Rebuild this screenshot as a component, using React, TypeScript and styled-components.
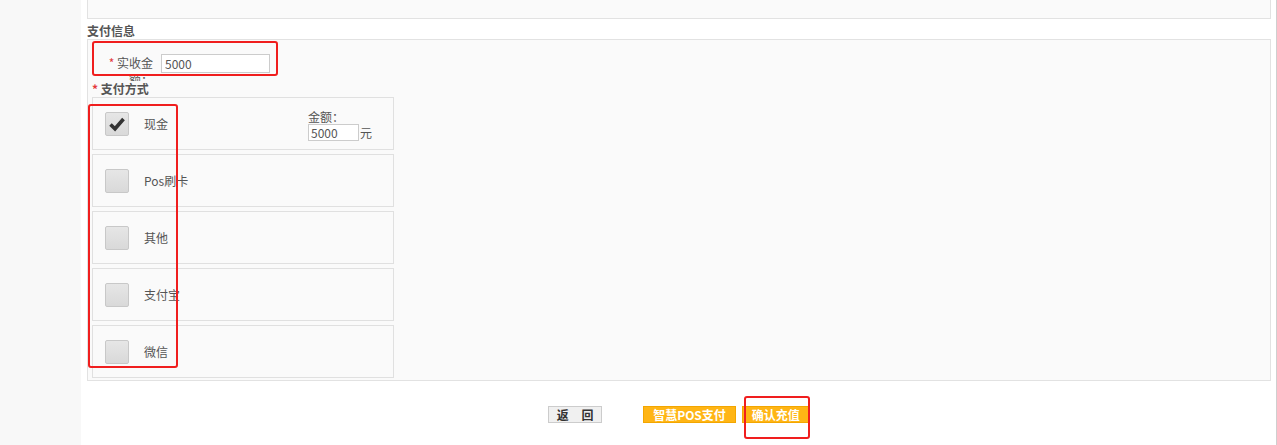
import React from "react";
import styled, { createGlobalStyle } from "styled-components";

const methods = [
  { key: "cash", label: "现金", checked: true },
  { key: "pos", label: "Pos刷卡", checked: false },
  { key: "other", label: "其他", checked: false },
  { key: "alipay", label: "支付宝", checked: false },
  { key: "wechat", label: "微信", checked: false },
];

// red marks drawn on the screenshot
const marks = [
  { left: 92, top: 41, width: 186, height: 35 },
  { left: 88, top: 104, width: 90, height: 264 },
  { left: 744, top: 396, width: 66, height: 43 },
];

const App: React.FC = () => {
  return (
    <Page>
      <GlobalStyle />
      <Sidebar />
      <Main>
        <TopBox />
        <SectionTitle>支付信息</SectionTitle>
        <InfoBox>
          <AmountRow>
            <AmountLabel>
              <Star>*</Star> 实收金额：
            </AmountLabel>
            <AmountInput defaultValue='5000' />
          </AmountRow>
          <MethodTitle>
            <Star>*</Star> 支付方式
          </MethodTitle>
          <MethodList>
            {methods.map((m) => (
              <MethodRow key={m.key}>
                <CheckBox>
                  {m.checked && (
                    <svg width='18' height='16' viewBox='0 0 18 16'>
                      <path
                        d='M2.5 8.5 L7 12.8 L15.5 3'
                        fill='none'
                        stroke='#333'
                        strokeWidth='3.6'
                        strokeLinejoin='miter'
                      />
                    </svg>
                  )}
                </CheckBox>
                <MethodName>{m.label}</MethodName>
                {m.checked && (
                  <MoneyBox>
                    <span>金额：</span>
                    <MoneyLine>
                      <MoneyInput defaultValue='5000' />
                      <span>元</span>
                    </MoneyLine>
                  </MoneyBox>
                )}
              </MethodRow>
            ))}
          </MethodList>
        </InfoBox>
        <Actions>
          <GrayButton>返 回</GrayButton>
          <Spacer />
          <OrangeButton>智慧POS支付</OrangeButton>
          <OrangeButton>确认充值</OrangeButton>
        </Actions>
      </Main>
      {marks.map((m, i) => (
        <Mark
          key={i}
          style={{ left: m.left, top: m.top, width: m.width, height: m.height }}
        />
      ))}
    </Page>
  );
};

const GlobalStyle = createGlobalStyle`
  html, body {
    margin: 0;
    padding: 0;
    background: #fff;
  }
  body {
    font-family: "Noto Sans CJK SC", "Liberation Sans", sans-serif;
    font-size: 12px;
    color: #555;
  }
`;

const Page = styled.div`
  position: relative;
  display: flex;
  width: 1277px;
  height: 445px;
  overflow: hidden;
`;

const Sidebar = styled.div`
  width: 81px;
  flex-shrink: 0;
  background: #f8f8f8;
`;

const Main = styled.div`
  flex: 1;
  display: flex;
  flex-direction: column;
  padding: 0 5px 0 6px;
  border-right: 1px solid #cfcfcf;
  background: #fff;
`;

const TopBox = styled.div`
  height: 18px;
  border: 1px solid #e2e2e2;
  border-top: none;
  background: #fafafa;
`;

const SectionTitle = styled.div`
  height: 20px;
  line-height: 24px;
  font-weight: bold;
  color: #555;
`;

const InfoBox = styled.div`
  height: 340px;
  border: 1px solid #e2e2e2;
  background: #fafafa;
`;

const AmountRow = styled.div`
  display: flex;
  align-items: flex-start;
  padding-top: 14px;
  height: 27px;
`;

const AmountLabel = styled.div`
  width: 50px;
  margin-left: 15px;
  height: 27px;
  line-height: 17px;
  overflow: hidden;
  text-align: right;
  color: #555;
`;

const Star = styled.span`
  color: #e4393c;
`;

const AmountInput = styled.input`
  box-sizing: border-box;
  margin: 0 0 0 8px;
  width: 109px;
  height: 19px;
  padding: 0 3px;
  border: 1px solid #ccc;
  background: #fff;
  font-family: "Noto Sans CJK SC", "Liberation Sans", sans-serif;
  font-size: 12px;
  color: #555;
  outline: none;
`;

const MethodTitle = styled.div`
  height: 16px;
  line-height: 15px;
  padding-left: 4px;
  font-weight: bold;
  color: #555;
`;

const MethodList = styled.div`
  display: flex;
  flex-direction: column;
  gap: 4px;
  padding-left: 4px;
`;

const MethodRow = styled.div`
  box-sizing: border-box;
  display: flex;
  align-items: center;
  width: 302px;
  height: 53px;
  padding-left: 12px;
  border: 1px solid #e0e0e0;
  background: #fafafa;
`;

const CheckBox = styled.div`
  box-sizing: border-box;
  display: flex;
  align-items: center;
  justify-content: center;
  width: 24px;
  height: 24px;
  border: 1px solid #c8c8c8;
  border-radius: 2px;
  background: linear-gradient(#e6e6e6, #d9d9d9);
`;

const MethodName = styled.span`
  margin-left: 15px;
  color: #555;
`;

const MoneyBox = styled.div`
  display: flex;
  flex-direction: column;
  margin-left: auto;
  margin-right: 21px;
  line-height: 14px;
  padding-top: 4px;
  color: #555;
`;

const MoneyLine = styled.div`
  display: flex;
  align-items: center;
  gap: 1px;
`;

const MoneyInput = styled.input`
  box-sizing: border-box;
  margin: 0;
  width: 51px;
  height: 17px;
  padding: 0 2px;
  border: 1px solid #ccc;
  background: #fff;
  font-family: "Noto Sans CJK SC", "Liberation Sans", sans-serif;
  font-size: 12px;
  color: #555;
  outline: none;
`;

const Actions = styled.div`
  display: flex;
  justify-content: center;
  gap: 6px;
  padding-top: 25px;
`;

const Spacer = styled.div`
  width: 29px;
`;

const GrayButton = styled.button`
  box-sizing: border-box;
  width: 54px;
  height: 17px;
  padding: 0 0 0 5px;
  border: 1px solid #ccc;
  background: #f0f0f0;
  font-family: "Noto Sans CJK SC", "Liberation Sans", sans-serif;
  font-size: 12px;
  font-weight: bold;
  line-height: 15px;
  letter-spacing: 5px;
  color: #333;
`;

const OrangeButton = styled.button`
  box-sizing: border-box;
  height: 17px;
  padding: 0 9px;
  border: 1px solid #f3a600;
  background: #ffb515;
  font-family: "Noto Sans CJK SC", "Liberation Sans", sans-serif;
  font-size: 12px;
  font-weight: bold;
  line-height: 15px;
  color: #fff;
`;

const Mark = styled.div`
  position: absolute;
  box-sizing: border-box;
  border: 2px solid #f01e1e;
  border-radius: 3px;
  pointer-events: none;
`;

export default App;
